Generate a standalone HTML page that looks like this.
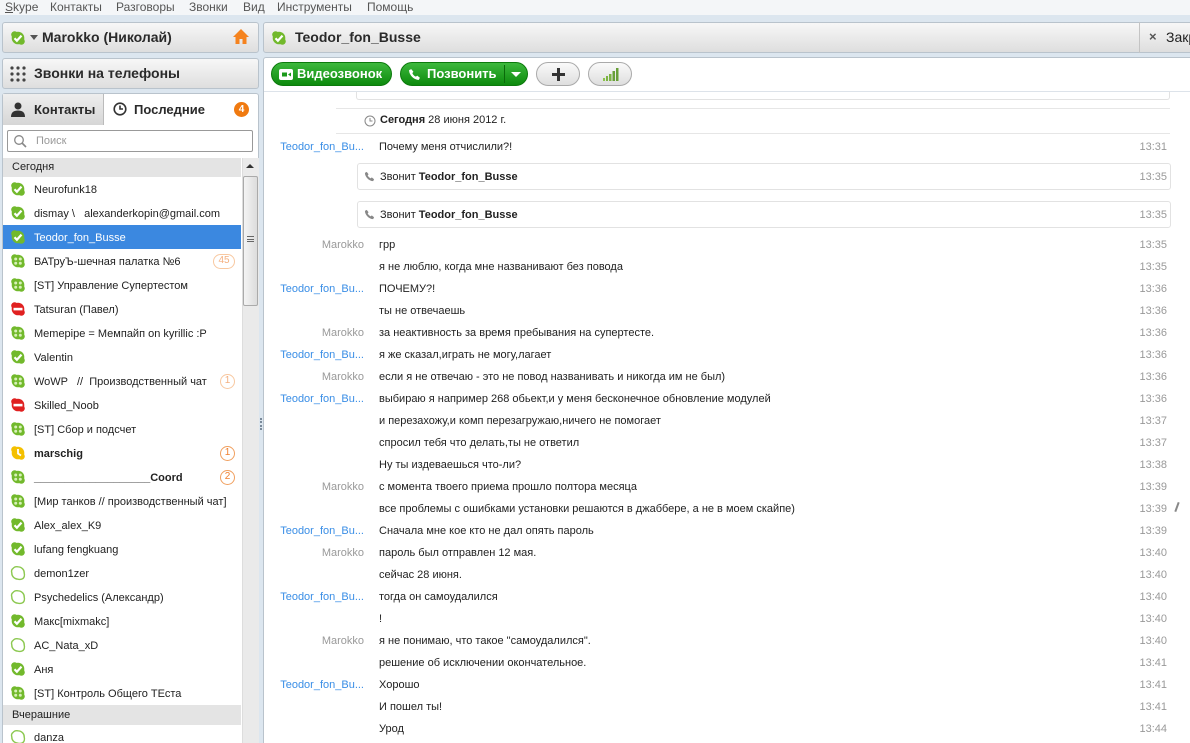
<!DOCTYPE html>
<html style="overflow:hidden;height:743px"><head><meta charset="utf-8">
<style>
*{margin:0;padding:0;box-sizing:border-box}
body{width:1190px;height:743px;overflow:hidden;background:#dce6ef;font-family:"Liberation Sans","DejaVu Sans",sans-serif;font-size:11px;color:#222;position:relative}
.abs{position:absolute}
.menu{left:0;top:0;width:1190px;height:15px;background:#f4f6f8;color:#555;font-size:12px;line-height:14px}
.menu span{position:absolute;top:0}
.box{background:linear-gradient(#f7f7f7,#dedede);border:1px solid #b9c3cc;border-radius:3px}
.hdr{font-size:14px;font-weight:bold;color:#2a2a2a}
.row{position:absolute;left:3px;width:238px;height:24px;font-size:11px;line-height:24px}
.row svg{position:absolute;left:7px;top:4px}
.row .t{position:absolute;left:31px;top:1px;white-space:nowrap}
.badge{position:absolute;right:6px;top:5px;width:15px;height:15px;border-radius:50%;border:1.5px solid #f0a060;color:#f08030;font-size:10px;line-height:12px;text-align:center}
.msg{position:absolute;left:264px;width:920px;height:22px;line-height:22px;font-size:11px}
.msg .n{position:absolute;right:820px;top:1px;color:#999;white-space:nowrap}
.msg .n.b{color:#3a8ee6}
.msg .m{position:absolute;left:115px;top:1px;white-space:nowrap}
.msg .tm{position:absolute;right:17px;top:1px;color:#999}
.call{position:absolute;left:357px;width:814px;height:27px;border:1px solid #e2e2e2;border-radius:3px;line-height:25px}
.gbtn{position:absolute;top:62px;height:24px;border-radius:12px;background:linear-gradient(#3cb83c,#0d8a0d);border:1px solid #0c7a0c;color:#fff;font-size:13px;font-weight:bold;line-height:22px}
.wbtn{position:absolute;top:62px;height:24px;border-radius:12px;background:linear-gradient(#fafafa,#dedede);border:1px solid #aaa}
</style></head><body>
<svg width="0" height="0" style="position:absolute">
<defs>
<g id="blob"><circle cx="8" cy="8" r="6.3"/><circle cx="4.6" cy="4.6" r="3.4"/><circle cx="11.4" cy="11.4" r="3.4"/></g>
<symbol id="on" viewBox="0 0 16 16"><use href="#blob" fill="#72b92c"/><path d="M4.5 8.2l2.4 2.5L11.5 5.6" stroke="#fff" stroke-width="2.2" fill="none"/></symbol>
<symbol id="grp" viewBox="0 0 16 16"><use href="#blob" fill="#72b92c"/><circle cx="5.7" cy="6" r="1.5" fill="#d8f0b8"/><circle cx="10.3" cy="6" r="1.5" fill="#d8f0b8"/><circle cx="5.7" cy="10.3" r="1.5" fill="#d8f0b8"/><circle cx="10.3" cy="10.3" r="1.5" fill="#d8f0b8"/></symbol>
<symbol id="dnd" viewBox="0 0 16 16"><use href="#blob" fill="#e02020"/><rect x="3.5" y="6.8" width="9" height="2.6" fill="#fff"/></symbol>
<symbol id="away" viewBox="0 0 16 16"><use href="#blob" fill="#f4c000"/><path d="M8 4v4.5l3 2" stroke="#fff" stroke-width="1.8" fill="none"/></symbol>
<symbol id="off" viewBox="0 0 16 16"><g fill="none" stroke="#8cc850" stroke-width="1.4"><path d="M3 3.5C4.5 1.5 7 1.6 8 1.8 12 2 14.4 5 14.2 8 14.8 10 14.5 13.2 12 14 10 15 8.5 14.2 8 14.2 4 14 1.7 11 1.8 8 1.2 6 1.5 4.5 3 3.5z"/></g></symbol>
<symbol id="ph" viewBox="0 0 12 12"><path d="M3 1l2 2.5-1 1.2c.6 1.5 1.8 2.7 3.3 3.3l1.2-1L11 9l-1 2C5.5 11 1 6.5 1 2z" fill="#888"/></symbol>
<symbol id="phw" viewBox="0 0 12 12"><path d="M3 1l2 2.5-1 1.2c.6 1.5 1.8 2.7 3.3 3.3l1.2-1L11 9l-1 2C5.5 11 1 6.5 1 2z" fill="#fff"/></symbol>
</defs></svg>

<div class="abs menu"><span style="left:5px"><u>S</u>kype</span><span style="left:50px">Контакты</span><span style="left:116px">Разговоры</span><span style="left:189px">Звонки</span><span style="left:243px">Вид</span><span style="left:277px">Инструменты</span><span style="left:367px">Помощь</span></div>

<div class="abs box" style="left:2px;top:22px;width:257px;height:31px"></div>
<svg class="abs" style="left:10px;top:30px" width="16" height="16"><use href="#on"/></svg>
<div class="abs" style="left:30px;top:35px;border-left:4px solid transparent;border-right:4px solid transparent;border-top:5px solid #555"></div>
<div class="abs hdr" style="left:42px;top:29px">Marokko (Николай)</div>
<svg class="abs" style="left:232px;top:28px" width="18" height="18" viewBox="0 0 18 18"><path d="M9 1L1 9h2.5v7h4v-5h3v5h4V9H17z" fill="#f5831f"/></svg>

<div class="abs box" style="left:2px;top:58px;width:257px;height:31px"></div>
<svg class="abs" style="left:9px;top:65px" width="18" height="18"><g fill="#444"><circle cx="3" cy="3" r="1.6"/><circle cx="9" cy="3" r="1.6"/><circle cx="15" cy="3" r="1.6"/><circle cx="3" cy="9" r="1.6"/><circle cx="9" cy="9" r="1.6"/><circle cx="15" cy="9" r="1.6"/><circle cx="3" cy="15" r="1.6"/><circle cx="9" cy="15" r="1.6"/><circle cx="15" cy="15" r="1.6"/></g></svg>
<div class="abs hdr" style="left:34px;top:65px">Звонки на телефоны</div>

<div class="abs" style="left:2px;top:93px;width:257px;height:660px;background:#fff;border:1px solid #b9c3cc;border-radius:3px"></div>
<div class="abs" style="left:3px;top:94px;width:101px;height:31px;background:linear-gradient(#eee,#d6d6d6);border-right:1px solid #bbb"></div>
<svg class="abs" style="left:10px;top:101px" width="16" height="16" viewBox="0 0 16 16"><circle cx="8" cy="5" r="3.5" fill="#333"/><path d="M1 16c0-5 3-6.5 7-6.5S15 11 15 16z" fill="#333"/></svg>
<div class="abs hdr" style="left:34px;top:102px;font-size:13px">Контакты</div>
<svg class="abs" style="left:113px;top:102px" width="14" height="14" viewBox="0 0 14 14"><circle cx="7" cy="7" r="5.8" fill="none" stroke="#333" stroke-width="1.6"/><path d="M7 3.5V7h3" stroke="#333" stroke-width="1.6" fill="none"/></svg>
<div class="abs hdr" style="left:134px;top:102px;font-size:13px">Последние</div>
<div class="abs" style="left:234px;top:102px;width:15px;height:15px;border-radius:50%;background:#f07a10;color:#fff;font-size:10px;font-weight:bold;text-align:center;line-height:15px">4</div>

<div class="abs" style="left:7px;top:130px;width:246px;height:22px;border:1px solid #999;border-radius:2px;background:#fff"></div>
<svg class="abs" style="left:13px;top:134px" width="14" height="14" viewBox="0 0 14 14"><circle cx="6" cy="6" r="4.3" fill="none" stroke="#888" stroke-width="1.3"/><path d="M9 9l4 4" stroke="#888" stroke-width="1.6"/></svg>
<div class="abs" style="left:36px;top:135px;color:#999;font-size:11px">Поиск</div>

<div class="abs" style="left:3px;top:158px;width:238px;height:19px;background:#e4e4e4;line-height:19px;padding-left:9px;font-size:11px">Сегодня</div>
<div class="abs" style="left:242px;top:158px;width:17px;height:590px;background:#eaeaea;border-left:1px solid #ddd"></div>
<div class="abs" style="left:246px;top:164px;border-left:4px solid transparent;border-right:4px solid transparent;border-bottom:4px solid #333"></div>
<div class="abs" style="left:243px;top:176px;width:15px;height:130px;background:linear-gradient(90deg,#f4f4f4,#dcdcdc);border:1px solid #aaa;border-radius:2px"></div>
<div class="abs" style="left:247px;top:236px;width:7px;height:6px;border-top:1px solid #666;border-bottom:1px solid #666"></div>
<div class="abs" style="left:247px;top:239px;width:7px;height:1px;background:#666"></div>
<div class="abs" style="left:260px;top:418px;width:2px;height:12px;border-left:2px dotted #7a8a9a"></div>

<div class="row" style="top:177px"><svg width="16" height="16"><use href="#on"/></svg><span class="t">Neurofunk18</span></div>
<div class="row" style="top:201px"><svg width="16" height="16"><use href="#on"/></svg><span class="t">dismay \&nbsp;&nbsp; alexanderkopin@gmail.com</span></div>
<div class="row" style="top:225px;background:#3b88e0;color:#fff"><svg width="16" height="16"><use href="#on"/></svg><span class="t">Teodor_fon_Busse</span></div>
<div class="row" style="top:249px"><svg width="16" height="16"><use href="#grp"/></svg><span class="t">ВАТруЪ-шечная палатка №6</span><span class="badge" style="width:22px;border-radius:8px;border-color:#f8c8a0;color:#f4b080">45</span></div>
<div class="row" style="top:273px"><svg width="16" height="16"><use href="#grp"/></svg><span class="t">[ST] Управление Супертестом</span></div>
<div class="row" style="top:297px"><svg width="16" height="16"><use href="#dnd"/></svg><span class="t">Tatsuran (Павел)</span></div>
<div class="row" style="top:321px"><svg width="16" height="16"><use href="#grp"/></svg><span class="t">Memepipe = Мемпайп on kyrillic :P</span></div>
<div class="row" style="top:345px"><svg width="16" height="16"><use href="#on"/></svg><span class="t">Valentin</span></div>
<div class="row" style="top:369px"><svg width="16" height="16"><use href="#grp"/></svg><span class="t">WoWP &nbsp;&nbsp;// &nbsp;Производственный чат</span><span class="badge" style="border-color:#f8c8a0;color:#f4b080">1</span></div>
<div class="row" style="top:393px"><svg width="16" height="16"><use href="#dnd"/></svg><span class="t">Skilled_Noob</span></div>
<div class="row" style="top:417px"><svg width="16" height="16"><use href="#grp"/></svg><span class="t">[ST] Сбор и подсчет</span></div>
<div class="row" style="top:441px"><svg width="16" height="16"><use href="#away"/></svg><span class="t" style="font-weight:bold">marschig</span><span class="badge">1</span></div>
<div class="row" style="top:465px"><svg width="16" height="16"><use href="#grp"/></svg><span class="t" style="font-weight:bold">___________________Coord</span><span class="badge">2</span></div>
<div class="row" style="top:489px"><svg width="16" height="16"><use href="#grp"/></svg><span class="t">[Мир танков // производственный чат]</span></div>
<div class="row" style="top:513px"><svg width="16" height="16"><use href="#on"/></svg><span class="t">Alex_alex_K9</span></div>
<div class="row" style="top:537px"><svg width="16" height="16"><use href="#on"/></svg><span class="t">lufang fengkuang</span></div>
<div class="row" style="top:561px"><svg width="16" height="16"><use href="#off"/></svg><span class="t">demon1zer</span></div>
<div class="row" style="top:585px"><svg width="16" height="16"><use href="#off"/></svg><span class="t">Psychedelics (Александр)</span></div>
<div class="row" style="top:609px"><svg width="16" height="16"><use href="#on"/></svg><span class="t">Макс[mixmakc]</span></div>
<div class="row" style="top:633px"><svg width="16" height="16"><use href="#off"/></svg><span class="t">AC_Nata_xD</span></div>
<div class="row" style="top:657px"><svg width="16" height="16"><use href="#on"/></svg><span class="t">Аня</span></div>
<div class="row" style="top:681px"><svg width="16" height="16"><use href="#grp"/></svg><span class="t">[ST] Контроль Общего ТЕста</span></div>
<div class="abs" style="left:3px;top:705px;width:238px;height:20px;background:#e4e4e4;line-height:20px;padding-left:9px;font-size:11px">Вчерашние</div>
<div class="row" style="top:725px"><svg width="16" height="16"><use href="#off"/></svg><span class="t">danza</span></div>

<div class="abs box" style="left:263px;top:22px;width:940px;height:31px"></div>
<svg class="abs" style="left:271px;top:30px" width="16" height="16"><use href="#on"/></svg>
<div class="abs hdr" style="left:295px;top:29px;font-size:14px">Teodor_fon_Busse</div>
<div class="abs" style="left:1139px;top:22px;width:1px;height:31px;background:#c4c4c4"></div>
<div class="abs" style="left:1149px;top:29px;font-size:13px;font-weight:bold;color:#555">×</div>
<div class="abs" style="left:1166px;top:29px;font-size:14px;color:#222">Закрыть</div>

<div class="abs" style="left:263px;top:57px;width:940px;height:700px;background:#fff;border:1px solid #b9c3cc;border-radius:3px"></div>
<div class="abs" style="left:264px;top:91px;width:926px;height:1px;background:#dde3ea"></div>
<div class="gbtn" style="left:271px;width:121px"><svg style="position:absolute;left:7px;top:6px" width="14" height="11" viewBox="0 0 14 11"><rect x="0" y="0" width="14" height="11" rx="2" fill="#fff"/><rect x="3" y="3.5" width="5" height="4" fill="#1a9a1a"/><path d="M9 5.5l3-2v4z" fill="#1a9a1a"/></svg><span style="position:absolute;left:25px">Видеозвонок</span></div>
<div class="gbtn" style="left:400px;width:128px"><svg style="position:absolute;left:7px;top:5px" width="13" height="13"><use href="#phw"/></svg><span style="position:absolute;left:26px">Позвонить</span><div style="position:absolute;left:103px;top:2px;width:1px;height:18px;background:#0a6a0a"></div><div style="position:absolute;left:110px;top:9px;border-left:5px solid transparent;border-right:5px solid transparent;border-top:5px solid #fff"></div></div>
<div class="wbtn" style="left:536px;width:44px"><div style="position:absolute;left:15px;top:10px;width:13px;height:3px;background:#333"></div><div style="position:absolute;left:20px;top:5px;width:3px;height:13px;background:#333"></div></div>
<div class="wbtn" style="left:588px;width:44px"><svg style="position:absolute;left:14px;top:5px" width="16" height="13"><rect x="0" y="10" width="2" height="3" fill="#8bc34a"/><rect x="3" y="8" width="2" height="5" fill="#7cb342"/><rect x="6" y="6" width="2.5" height="7" fill="#7cb342"/><rect x="9.5" y="3" width="2.5" height="10" fill="#689f38"/><rect x="13" y="0" width="2.5" height="13" fill="#689f38"/></svg></div>

<div class="abs" style="left:356px;top:92px;width:814px;height:8px;border:1px solid #e2e2e2;border-top:none;border-radius:0 0 3px 3px"></div>
<div class="abs" style="left:336px;top:108px;width:834px;height:1px;background:#e6e6e6"></div>
<div class="abs" style="left:336px;top:133px;width:834px;height:1px;background:#e6e6e6"></div>
<svg class="abs" style="left:364px;top:115px" width="12" height="12" viewBox="0 0 12 12"><circle cx="6" cy="6" r="5" fill="none" stroke="#888"/><path d="M6 3v3h2.5" stroke="#888" fill="none"/></svg>
<div class="abs" style="left:380px;top:114px;font-size:11px"><b>Сегодня</b> 28 июня 2012 г.</div>

<div class="msg" style="top:135px"><span class="n b">Teodor_fon_Bu...</span><span class="m">Почему меня отчислили?!</span><span class="tm">13:31</span></div>
<div class="call" style="top:163px"><svg style="position:absolute;left:6px;top:7px" width="11" height="11"><use href="#ph"/></svg><span style="position:absolute;left:22px;top:1px">Звонит <b>Teodor_fon_Busse</b></span><span style="position:absolute;right:3px;top:1px;color:#999">13:35</span></div>
<div class="call" style="top:201px"><svg style="position:absolute;left:6px;top:7px" width="11" height="11"><use href="#ph"/></svg><span style="position:absolute;left:22px;top:1px">Звонит <b>Teodor_fon_Busse</b></span><span style="position:absolute;right:3px;top:1px;color:#999">13:35</span></div>

<div class="msg" style="top:233px"><span class="n">Marokko</span><span class="m">грр</span><span class="tm">13:35</span></div>
<div class="msg" style="top:255px"><span class="m">я не люблю, когда мне названивают без повода</span><span class="tm">13:35</span></div>
<div class="msg" style="top:277px"><span class="n b">Teodor_fon_Bu...</span><span class="m">ПОЧЕМУ?!</span><span class="tm">13:36</span></div>
<div class="msg" style="top:299px"><span class="m">ты не отвечаешь</span><span class="tm">13:36</span></div>
<div class="msg" style="top:321px"><span class="n">Marokko</span><span class="m">за неактивность за время пребывания на супертесте.</span><span class="tm">13:36</span></div>
<div class="msg" style="top:343px"><span class="n b">Teodor_fon_Bu...</span><span class="m">я же сказал,играть не могу,лагает</span><span class="tm">13:36</span></div>
<div class="msg" style="top:365px"><span class="n">Marokko</span><span class="m">если я не отвечаю - это не повод названивать и никогда им не был)</span><span class="tm">13:36</span></div>
<div class="msg" style="top:387px"><span class="n b">Teodor_fon_Bu...</span><span class="m">выбираю я например 268 обьект,и у меня бесконечное обновление модулей</span><span class="tm">13:36</span></div>
<div class="msg" style="top:409px"><span class="m">и перезахожу,и комп перезагружаю,ничего не помогает</span><span class="tm">13:37</span></div>
<div class="msg" style="top:431px"><span class="m">спросил тебя что делать,ты не ответил</span><span class="tm">13:37</span></div>
<div class="msg" style="top:453px"><span class="m">Ну ты издеваешься что-ли?</span><span class="tm">13:38</span></div>
<div class="msg" style="top:475px"><span class="n">Marokko</span><span class="m">с момента твоего приема прошло полтора месяца</span><span class="tm">13:39</span></div>
<div class="msg" style="top:497px"><span class="m">все проблемы с ошибками установки решаются в джаббере, а не в моем скайпе)</span><span class="tm">13:39</span></div>
<div class="abs" style="left:1176px;top:502px;width:2px;height:10px;background:#888;transform:rotate(20deg)"></div>
<div class="msg" style="top:519px"><span class="n b">Teodor_fon_Bu...</span><span class="m">Сначала мне кое кто не дал опять пароль</span><span class="tm">13:39</span></div>
<div class="msg" style="top:541px"><span class="n">Marokko</span><span class="m">пароль был отправлен 12 мая.</span><span class="tm">13:40</span></div>
<div class="msg" style="top:563px"><span class="m">сейчас 28 июня.</span><span class="tm">13:40</span></div>
<div class="msg" style="top:585px"><span class="n b">Teodor_fon_Bu...</span><span class="m">тогда он самоудалился</span><span class="tm">13:40</span></div>
<div class="msg" style="top:607px"><span class="m">!</span><span class="tm">13:40</span></div>
<div class="msg" style="top:629px"><span class="n">Marokko</span><span class="m">я не понимаю, что такое "самоудалился".</span><span class="tm">13:40</span></div>
<div class="msg" style="top:651px"><span class="m">решение об исключении окончательное.</span><span class="tm">13:41</span></div>
<div class="msg" style="top:673px"><span class="n b">Teodor_fon_Bu...</span><span class="m">Хорошо</span><span class="tm">13:41</span></div>
<div class="msg" style="top:695px"><span class="m">И пошел ты!</span><span class="tm">13:41</span></div>
<div class="msg" style="top:717px"><span class="m">Урод</span><span class="tm">13:44</span></div>
</body></html>
